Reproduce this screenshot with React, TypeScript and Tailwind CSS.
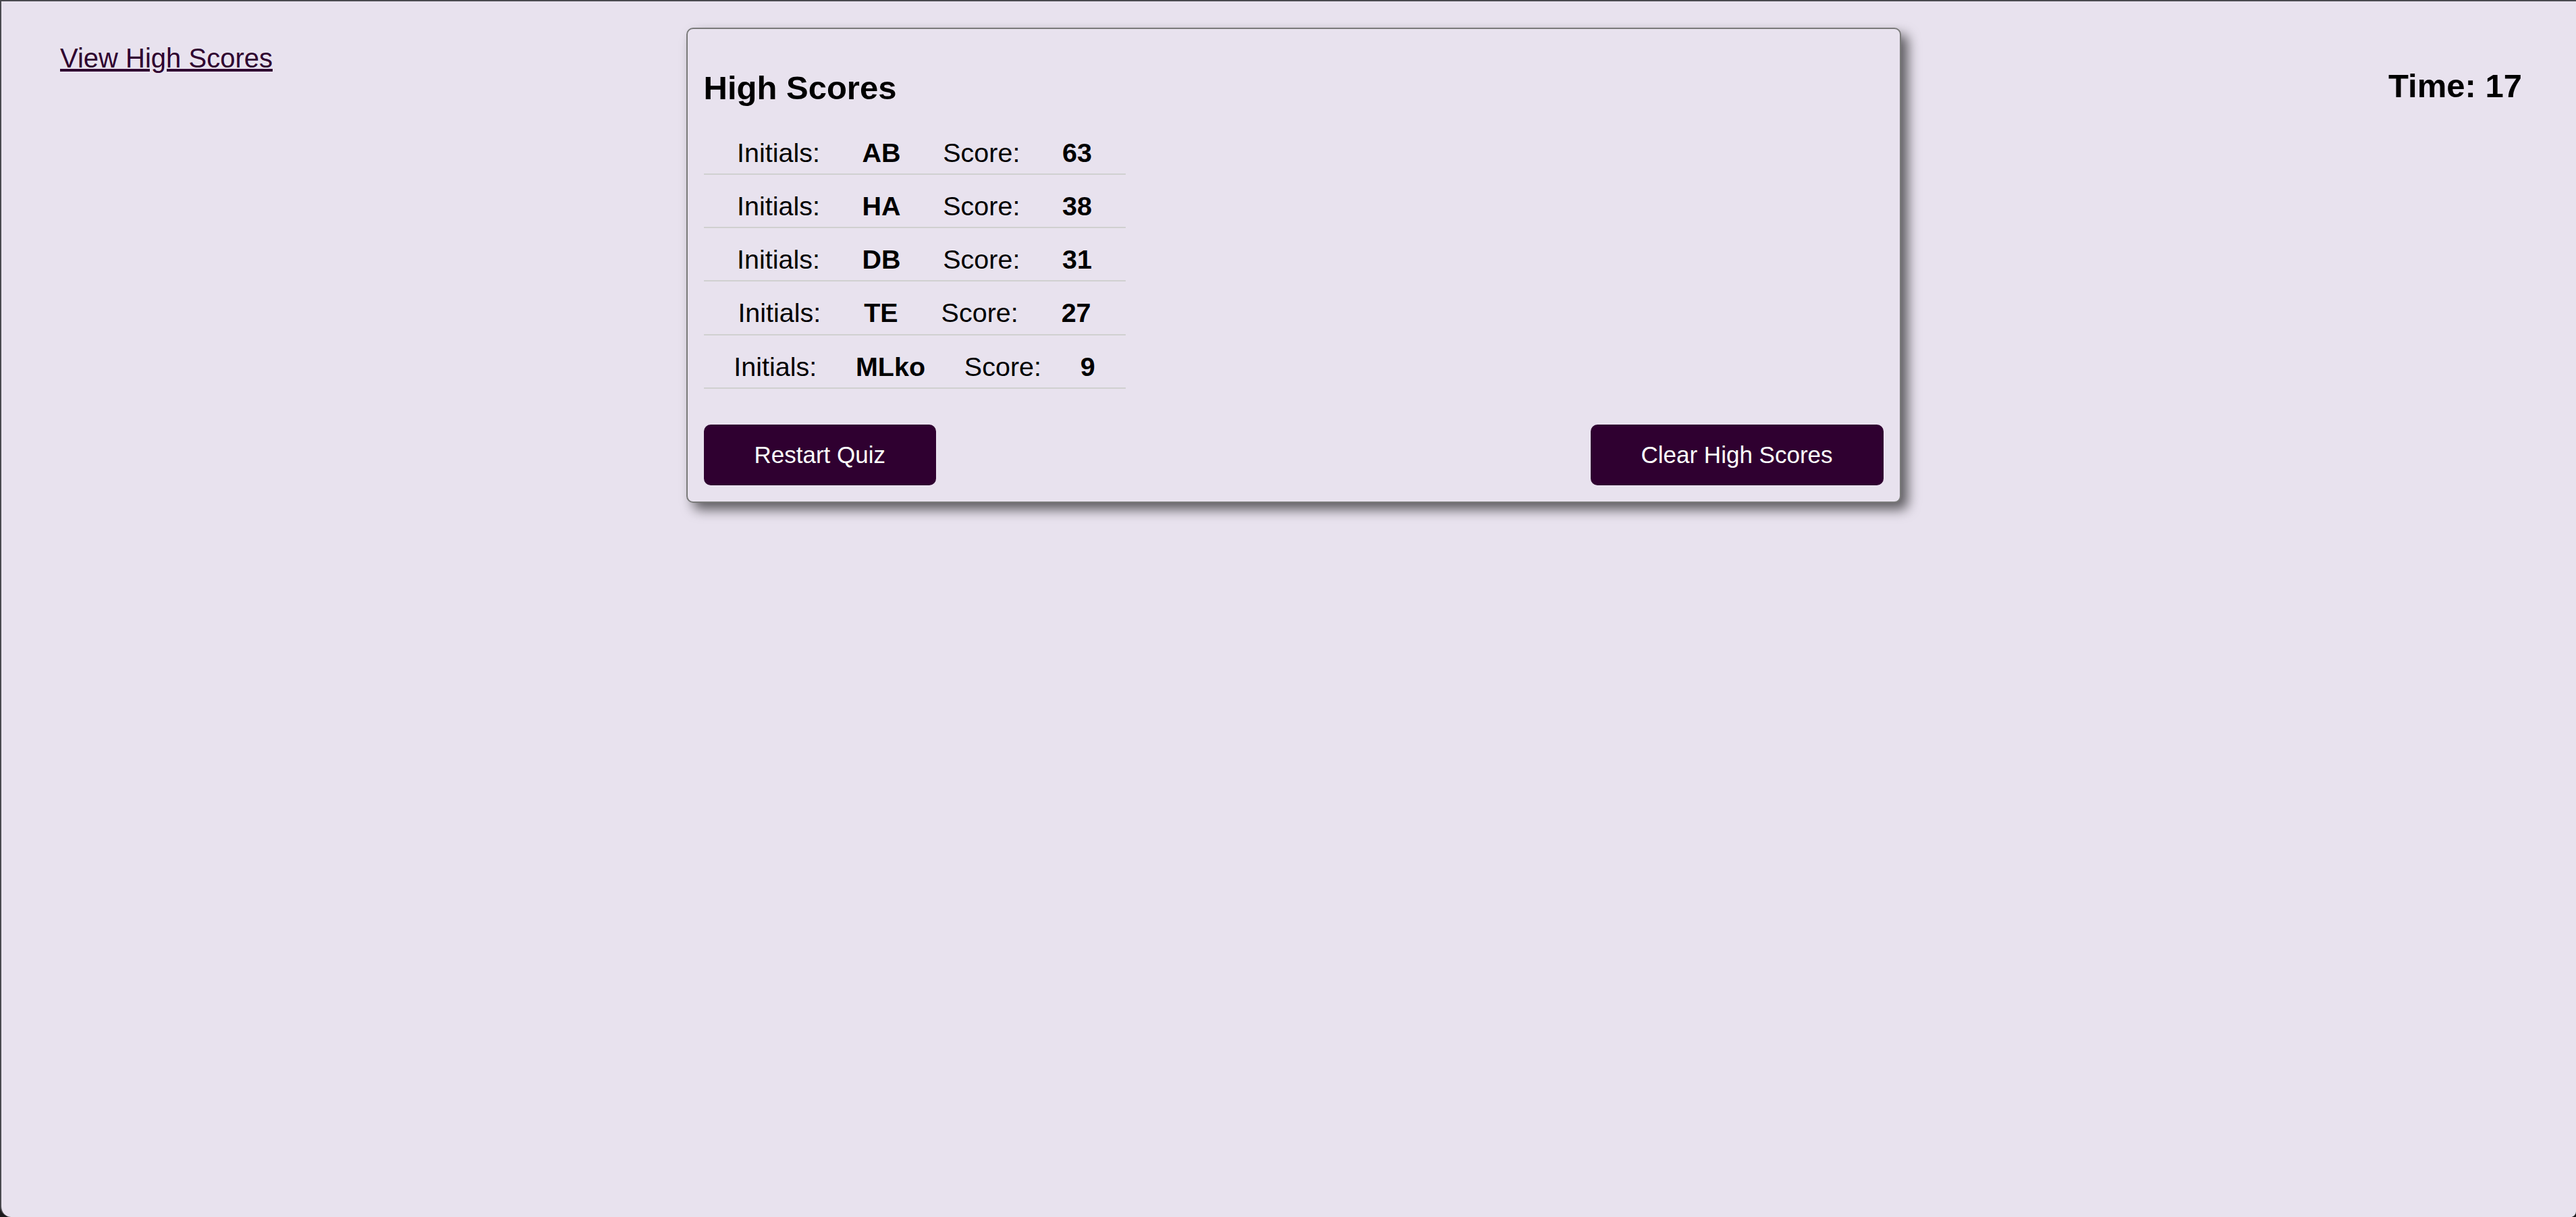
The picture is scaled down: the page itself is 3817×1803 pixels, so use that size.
import React from "react";

const scores = [
  { initials: "AB", score: 63 },
  { initials: "HA", score: 38 },
  { initials: "DB", score: 31 },
  { initials: "TE", score: 27 },
  { initials: "MLko", score: 9 },
];

export default function App() {
  return (
    <div className="h-screen w-full overflow-hidden bg-[#1b1b1d]" style={{ fontFamily: '"Liberation Sans", Arial, sans-serif' }}>
      <div className="flex h-full items-start border-t-2 border-l-2 border-[#4a4a4f] bg-[#e8e2ee] rounded-bl-[16px] rounded-br-[8px] text-black">
        <div className="flex-1 pl-[87px] pt-[61px]">
          <a href="#" className="text-[40px] leading-[46px] text-[#2f0030] underline">
            View High Scores
          </a>
        </div>

        <div className="ml-[7px] mt-[39px] w-[1800px] rounded-[10px] border-2 border-[#7a7a7a] bg-[#e8e2ee] px-[24px] pt-[59px] pb-[24px] shadow-[10px_10px_18px_rgba(0,0,0,0.6)]">
          <h2 className="mb-[21.5px] text-[49px] font-bold leading-[56px]">High Scores</h2>
          <ul className="w-[625px]">
            {scores.map((s) => (
              <li
                key={s.initials}
                className="flex justify-evenly border-b-2 border-[#d0d0d0] pt-[23px] pb-[8.3px] text-[39.5px] leading-[46px]"
              >
                <span className="mx-[13px]">Initials:</span>
                <span className="mx-[13px] font-bold">{s.initials}</span>
                <span className="mx-[13px]">Score:</span>
                <span className="mx-[13px] font-bold">{s.score}</span>
              </li>
            ))}
          </ul>
          <div className="mt-[53px] flex justify-between">
            <button className="rounded-[10px] bg-[#2f0030] px-[75px] py-[25px] text-[35px] leading-[40px] text-white">
              Restart Quiz
            </button>
            <button className="rounded-[10px] bg-[#2f0030] px-[75px] py-[25px] text-[35px] leading-[40px] text-white">
              Clear High Scores
            </button>
          </div>
        </div>

        <div className="flex flex-1 justify-end pr-[80px] pt-[97px]">
          <span className="text-[49px] font-bold leading-[56px]">Time: 17</span>
        </div>
      </div>
    </div>
  );
}
